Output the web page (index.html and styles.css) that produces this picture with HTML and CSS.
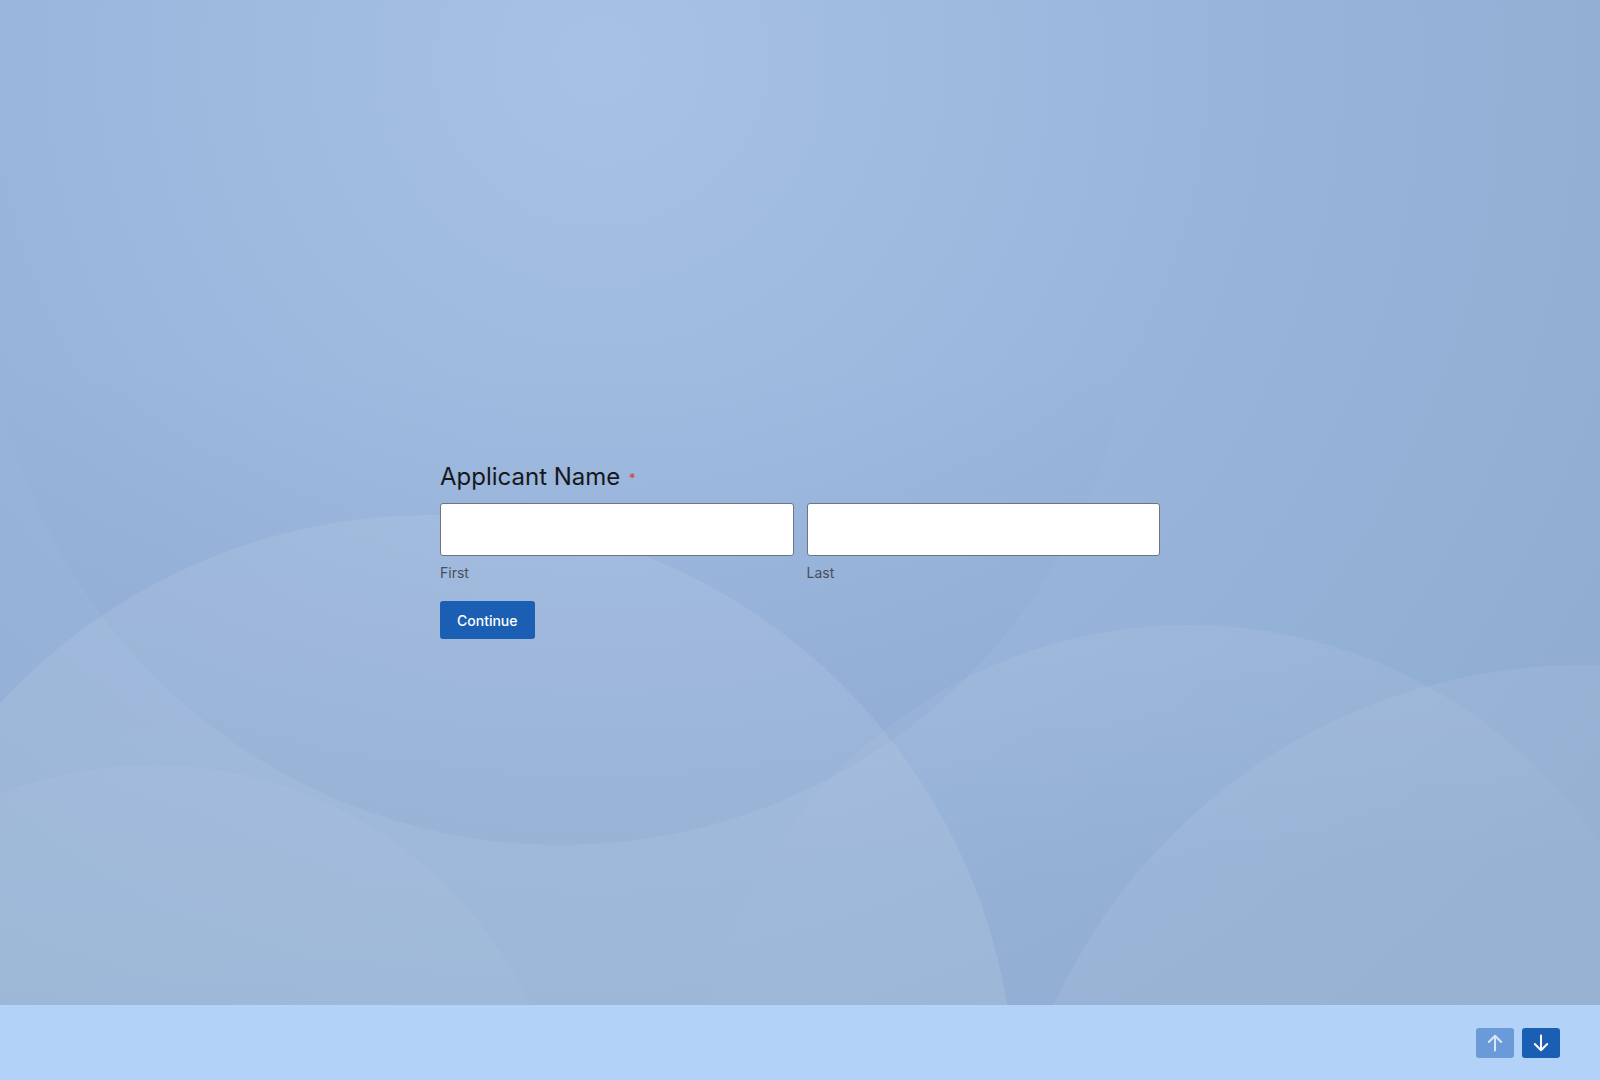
FILE: index.html
```html
<!DOCTYPE html>
<html lang="en">
<head>
<meta charset="utf-8">
<title>Applicant Name</title>
<link rel="stylesheet" href="styles.css">
</head>
<body>
<div class="page">
  <svg class="backdrop" width="1600" height="1005" viewBox="0 0 1600 1005" aria-hidden="true">
    <defs>
      <radialGradient id="bgBase" gradientUnits="userSpaceOnUse" cx="600" cy="60" r="1300">
        <stop offset="0" stop-color="#a6c1e5"/>
        <stop offset="0.25" stop-color="#a0bbe0"/>
        <stop offset="0.5" stop-color="#98b4da"/>
        <stop offset="0.77" stop-color="#92afd4"/>
        <stop offset="1" stop-color="#8faccf"/>
      </radialGradient>
      <linearGradient id="fillB" gradientUnits="userSpaceOnUse" x1="0" y1="0" x2="0" y2="845">
        <stop offset="0" stop-color="#1e3c78" stop-opacity="0"/>
        <stop offset="0.42" stop-color="#1e3c78" stop-opacity="0"/>
        <stop offset="1" stop-color="#1e3c78" stop-opacity="0.05"/>
      </linearGradient>
      <linearGradient id="fillA" gradientUnits="userSpaceOnUse" x1="0" y1="515" x2="0" y2="1005">
        <stop offset="0" stop-color="#ffffff" stop-opacity="0.08"/>
        <stop offset="1" stop-color="#ffffff" stop-opacity="0.09"/>
      </linearGradient>
      <linearGradient id="fillC" gradientUnits="userSpaceOnUse" x1="0" y1="625" x2="0" y2="880">
        <stop offset="0" stop-color="#ffffff" stop-opacity="0.07"/>
        <stop offset="1" stop-color="#ffffff" stop-opacity="0.01"/>
      </linearGradient>
      <linearGradient id="fillD" gradientUnits="userSpaceOnUse" x1="0" y1="665" x2="0" y2="1005">
        <stop offset="0" stop-color="#ffffff" stop-opacity="0.06"/>
        <stop offset="1" stop-color="#ffffff" stop-opacity="0.06"/>
      </linearGradient>
      <linearGradient id="fillE" gradientUnits="userSpaceOnUse" x1="0" y1="765" x2="0" y2="1005">
        <stop offset="0" stop-color="#ffffff" stop-opacity="0.045"/>
        <stop offset="1" stop-color="#ffffff" stop-opacity="0.03"/>
      </linearGradient>
    </defs>
    <rect width="1600" height="1005" fill="url(#bgBase)"/>
    <circle cx="561" cy="270" r="575" fill="url(#fillB)"/>
    <circle cx="1582" cy="1245" r="580" fill="url(#fillD)"/>
    <circle cx="1189" cy="1120" r="495" fill="url(#fillC)"/>
    <circle cx="153" cy="1182" r="417" fill="url(#fillE)"/>
    <circle cx="430" cy="1100" r="585" fill="url(#fillA)"/>
  </svg>
  <main class="main">
    <form class="form">
      <div class="question">
        <label class="question-label">Applicant Name <span class="required">*</span></label>
        <div class="name-row">
          <div class="name-field">
            <input class="text-input" type="text" aria-label="First">
            <span class="sublabel">First</span>
          </div>
          <div class="name-field">
            <input class="text-input" type="text" aria-label="Last">
            <span class="sublabel">Last</span>
          </div>
        </div>
      </div>
      <button class="continue-btn" type="button">Continue</button>
    </form>
  </main>
  <footer class="footer">
    <button class="nav-btn nav-btn-up" type="button" aria-label="Previous">
      <svg width="16" height="18" viewBox="0 0 16 18" fill="none" stroke="currentColor" stroke-width="2" stroke-linecap="round" stroke-linejoin="round"><path d="M8 16.5V1.8M1.8 8L8 1.8L14.2 8"/></svg>
    </button>
    <button class="nav-btn nav-btn-down" type="button" aria-label="Next">
      <svg width="16" height="18" viewBox="0 0 16 18" fill="none" stroke="currentColor" stroke-width="2" stroke-linecap="round" stroke-linejoin="round"><path d="M8 1.5V16.2M1.8 10L8 16.2L14.2 10"/></svg>
    </button>
  </footer>
</div>
</body>
</html>
```
FILE: styles.css
```css
* {
  box-sizing: border-box;
}

html, body {
  margin: 0;
  padding: 0;
}

body {
  font-family: Inter, "Noto Sans", "Liberation Sans", sans-serif;
  color: #1a1d21;
}

.page {
  width: 1600px;
  height: 1080px;
  display: grid;
  grid-template-columns: 1600px;
  grid-template-rows: 1005px 75px;
  overflow: hidden;
  background: #95b2d8;
}

.backdrop {
  grid-area: 1 / 1;
  display: block;
}

.main {
  grid-area: 1 / 1;
  display: flex;
  justify-content: center;
  padding-top: 462px;
}

.form {
  width: 720px;
  display: flex;
  flex-direction: column;
  align-items: flex-start;
}

.question {
  width: 100%;
}

.question-label {
  display: block;
  font-size: 24px;
  line-height: 29px;
  font-weight: 400;
  color: #17191c;
  margin-bottom: 10px;
}

.required {
  color: #d63b2f;
  font-size: 13px;
  vertical-align: 2px;
  margin-left: 2px;
}

.name-row {
  display: flex;
  gap: 13px;
}

.name-field {
  flex: 1;
  display: flex;
  flex-direction: column;
}

.text-input {
  width: 100%;
  height: 53px;
  border: 1px solid #6e7480;
  border-radius: 3px;
  background: #ffffff;
  font: inherit;
  margin: 0;
}

.sublabel {
  font-size: 14px;
  line-height: 20px;
  color: #474f5c;
  margin-top: 7px;
}

.continue-btn {
  margin-top: 18px;
  height: 38px;
  padding: 0 17px;
  border: none;
  border-radius: 3px;
  background: #1a5fb4;
  color: #ffffff;
  font-family: inherit;
  font-size: 14px;
  font-weight: 500;
  cursor: pointer;
}

.footer {
  grid-area: 2 / 1;
  background: #b3d2f8;
  display: flex;
  justify-content: flex-end;
  align-items: center;
  gap: 8px;
  padding-right: 40px;
}

.nav-btn {
  width: 38px;
  height: 30px;
  border: none;
  border-radius: 3px;
  display: flex;
  align-items: center;
  justify-content: center;
  padding: 0;
  cursor: pointer;
}

.nav-btn-up {
  background: #6a9bd8;
  color: #dbe7f6;
}

.nav-btn-down {
  background: #1a5fb4;
  color: #ffffff;
}
```
